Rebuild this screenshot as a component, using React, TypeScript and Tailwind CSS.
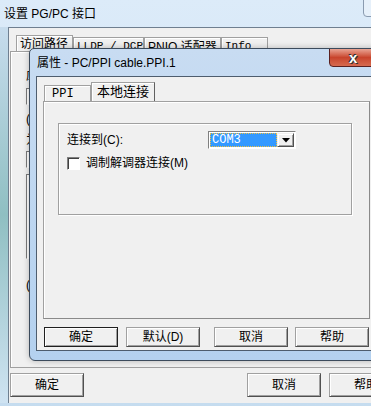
import React from 'react';

const cjk = "font-['Liberation_Sans','Noto_Sans_CJK_SC',sans-serif]";
const mono = "font-['Liberation_Mono','Noto_Sans_CJK_SC',monospace]";

function Btn({ label, def, className }: { label: string; def?: boolean; className?: string }) {
  return (
    <div
      className={`flex h-[20px] w-[74px] shrink-0 items-center justify-center bg-[#f0f0f0] text-[12px] leading-none text-black border ${
        def ? 'border-[#202020]' : 'border-[#a0a0a0] border-r-[#505050] border-b-[#505050]'
      } shadow-[inset_1px_1px_0_#ffffff,inset_-1px_-1px_0_#a0a0a0] ${className ?? ''}`}
    >
      {label}
    </div>
  );
}

function OuterTab({ label, active, w, latin }: { label: string; active?: boolean; w: number; latin?: boolean }) {
  return (
    <div
      style={{ width: w }}
      className={`flex shrink-0 items-start whitespace-nowrap border border-b-0 border-[#a0a0a0] bg-[#f0f0f0] px-[3px] leading-none shadow-[inset_1px_1px_0_#ffffff] ${
        active ? 'h-[16px] pt-[2px]' : 'mt-[2px] h-[14px] pt-[3px]'
      } ${latin ? `${mono} text-[11px]` : 'text-[12px]'}`}
    >
      {label}
    </div>
  );
}

export default function App() {
  return (
    <div className={`relative h-[406px] w-[371px] overflow-hidden bg-[#cfe2f3] ${cjk}`}>
      {/* outer window */}
      <div className="flex h-full flex-col bg-gradient-to-b from-[#dcebf9] to-[#c5dcef]">
        <div className="relative flex h-[27px] shrink-0 items-center pl-[4px] text-[12px] text-black">
          设置 PG/PC 接口
          <div className="absolute right-[-12px] top-[-2px] h-[19px] w-[20px] rounded-b-[4px] border border-[#8a9bb0] bg-[#e6f0fa]" />
        </div>
        <div className="flex min-h-0 flex-1">
          <div className="w-[8px] shrink-0 bg-gradient-to-b from-[#c7dced] via-[#8fbfc2] to-[#cfe3f2]" />
          <div className="flex min-w-0 flex-1 flex-col border-l border-t border-[#6f7f90] bg-[#f0f0f0] pb-[6px]">
            {/* outer tabs */}
            <div className="mt-[7px] flex h-[16px] pl-[7px]">
              <OuterTab label="访问路径" active w={57} />
              <OuterTab label="LLDP / DCP" w={71} latin />
              <OuterTab label="PNIO 适配器" w={77} />
              <OuterTab label="Info" w={47} latin />
            </div>
            {/* outer panel */}
            <div className="ml-[1px] flex flex-1 flex-col border-l border-t border-b border-[#a0a0a0] pl-[15px] text-[12px] leading-none shadow-[inset_1px_1px_0_#ffffff]">
              <div className="mt-[18px]">应</div>
              <div className="mt-[6px] h-[17px] w-[250px] border border-[#7a7a7a] border-r-white border-b-white bg-white pl-[2px] pt-[2px] text-[11px]">
                |
              </div>
              <div className="mt-[8px]">(</div>
              <div className="mt-[9px]">为</div>
              <div className="mt-[5px] h-[17px] w-[250px] border border-[#7a7a7a] border-r-white border-b-white bg-white pl-[2px] pt-[2px] text-[11px]">
                |
              </div>
              <div className="mt-[6px] flex h-[85px] w-[250px] flex-col gap-[6px] border border-[#7a7a7a] border-r-white border-b-white bg-white pl-[2px] pt-[3px] text-[11px]">
                <span>|</span>
                <span>|</span>
                <span>|</span>
                <span>|</span>
              </div>
              <div className="mt-[20px]">(</div>
            </div>
            <div className="mt-[5px] flex h-[24px] pl-[1px]">
              <Btn label="确定" className="h-[24px]" />
              <Btn label="取消" className="ml-[163px] h-[24px]" />
              <Btn label="帮助" className="ml-[8px] h-[24px]" />
            </div>
          </div>
        </div>
        <div className="h-[3px] shrink-0" />
      </div>

      {/* inner dialog */}
      <div className="absolute left-[29px] top-[48px] flex h-[313px] w-[360px] flex-col overflow-hidden rounded-t-[5px] rounded-bl-[6px] border border-[#3c4b5c] bg-gradient-to-b from-[#c8dcf2] to-[#b4d1ef] shadow-[0_0_6px_rgba(0,0,0,0.25)]">
        <div className="relative flex h-[27px] shrink-0 items-center pl-[7px] text-[12px] text-black">
          属性 - PC/PPI cable.PPI.1
          <div className="absolute left-[299px] top-[-1px] flex h-[19px] w-[60px] items-center rounded-b-[4px] border border-[#5a2020] bg-gradient-to-b from-[#e8a393] via-[#c8442c] to-[#d66a50] pl-[19px]">
            <span className="text-[15px] font-bold leading-none text-white [text-shadow:0_0_1px_#333,1px_1px_0_#333,-1px_-1px_0_#333]">x</span>
          </div>
        </div>
        <div className="flex min-h-0 flex-1 pl-[6px] pb-[9px]">
          <div className="flex flex-1 flex-col border-l border-t border-b border-[#4e5d6e] bg-[#f0f0f0] pl-[6px]">
            {/* inner tabs */}
            <div className="mt-[5px] flex h-[19px] pl-[1px]">
              <div className={`mt-[3px] flex h-[16px] w-[47px] items-center border border-b-0 border-[#a0a0a0] pl-[7px] text-[12px] shadow-[inset_1px_1px_0_#ffffff] ${mono}`}>
                PPI
              </div>
              <div className="flex h-[19px] w-[64px] items-center border border-b-0 border-[#a0a0a0] border-r-[#606060] pl-[5px] text-[13px] shadow-[inset_1px_1px_0_#ffffff]">
                本地连接
              </div>
            </div>
            {/* inner panel */}
            <div className="flex h-[218px] w-[327px] flex-col border border-[#a0a0a0] border-r-[#8a8a8a] border-b-[#8a8a8a] pl-[14px] pt-[21px] shadow-[inset_1px_1px_0_#ffffff]">
              <div className="flex h-[92px] w-[294px] flex-col border border-[#a0a0a0] pl-[8px] pt-[7px] text-[12px] shadow-[inset_1px_1px_0_#ffffff,1px_1px_0_#ffffff]">
                <div className="flex h-[18px] items-center">
                  <span className="w-[141px]">连接到(C):</span>
                  <div className="flex h-[18px] w-[88px] border border-[#808080] border-r-white border-b-white bg-white p-[1px]">
                    <div className={`flex flex-1 items-center border border-dotted border-[#f0c040] bg-[#3399ff] pl-[1px] text-[12px] leading-none text-white ${mono}`}>
                      COM3
                    </div>
                    <div className="flex w-[17px] items-center justify-center border border-[#f0f0f0] border-r-[#505050] border-b-[#505050] bg-[#f0f0f0] shadow-[inset_1px_1px_0_#ffffff,inset_-1px_-1px_0_#a0a0a0]">
                      <svg width="8" height="5" viewBox="0 0 8 5">
                        <path d="M0 0h8L4 4.5z" fill="#000" />
                      </svg>
                    </div>
                  </div>
                </div>
                <div className="mt-[6px] flex h-[16px] items-center">
                  <div className="h-[13px] w-[13px] border border-[#808080] border-r-white border-b-white bg-white shadow-[inset_1px_1px_0_#404040]" />
                  <span className="ml-[6px]">调制解调器连接(M)</span>
                </div>
              </div>
            </div>
            <div className="mt-[8px] flex h-[20px] pl-[1px]">
              <Btn label="确定" def />
              <Btn label="默认(D)" className="ml-[8px]" />
              <Btn label="取消" className="ml-[14px]" />
              <Btn label="帮助" className="ml-[7px]" />
            </div>
          </div>
        </div>
      </div>
    </div>
  );
}
